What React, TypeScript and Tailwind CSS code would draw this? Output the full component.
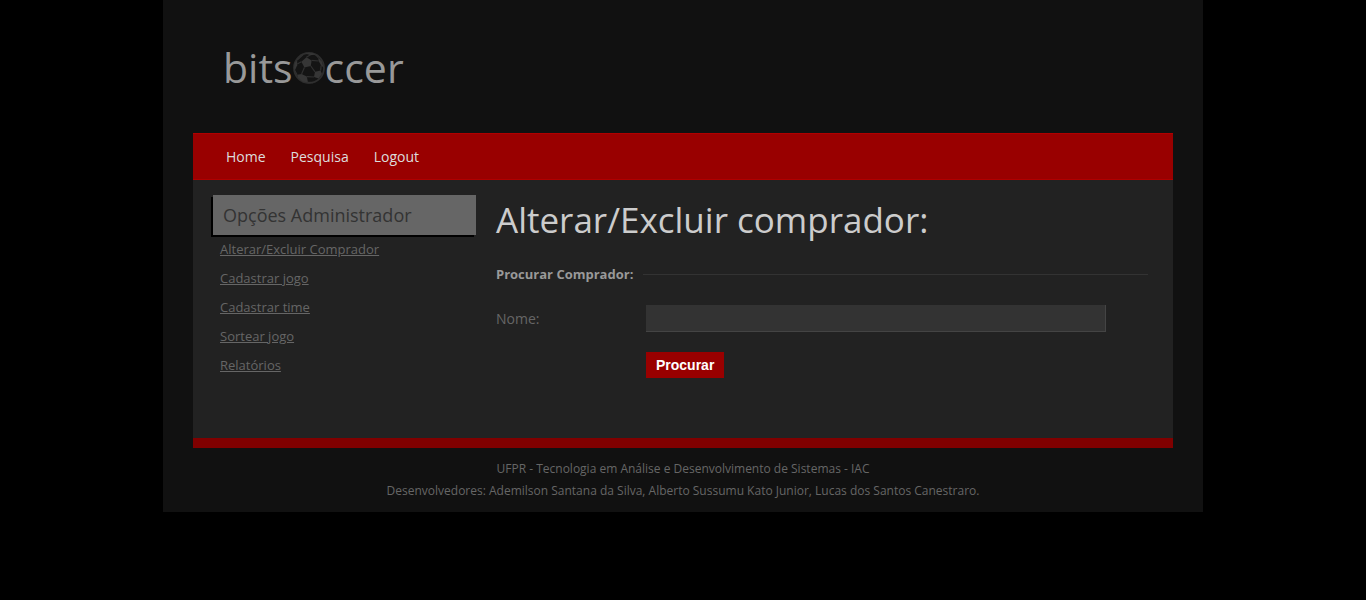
const navLinks = ['Home', 'Pesquisa', 'Logout'];

const adminLinks = [
  'Alterar/Excluir Comprador',
  'Cadastrar jogo',
  'Cadastrar time',
  'Sortear jogo',
  'Relatórios',
];

function SoccerBall() {
  return (
    <svg viewBox="0 0 32 32" className="mt-0.5 size-8" aria-hidden="true">
      <circle cx="16" cy="16" r="15" fill="#141414" stroke="#2e2e2e" strokeWidth="1.8" />
      <g fill="#363636">
        <path d="M13.4 5.2 18.6 8.4 17.8 14 11.4 15.6 8.4 9.8Z" />
        <path d="M25.2 5.6 28.8 9.4 30.6 15.4 28.2 13.4 25.6 9Z" />
        <path d="M22 19.8 27.6 18.6 29 22 25.6 26.6 21 25Z" />
        <path d="M8.6 22 13.8 24.6 15 30.4 9.5 29.4 5 25.8 4 22.8Z" />
        <path d="M1 15.5 2 10.6 4.2 8 4.2 13.2 1.8 18.4Z" />
        <path d="M12 1.2 20 1.2 22.6 2.6 17.5 3.2Z" />
      </g>
      <path
        d="M13.4 5.2 17.5 2.8M8.4 9.8 4.2 12M11.4 15.6 8.6 22M17.8 14 22 19.8M18.6 8.4 25.6 9M4 22.8 1.8 18.4M13.8 24.6 21 25M27.6 18.6 28.2 13.4M15 30.4 20 30.6M4.2 8 10 2.8M22.6 2.6 25.2 5.6"
        fill="none"
        stroke="#303030"
        strokeWidth="1.2"
      />
    </svg>
  );
}

export default function App() {
  return (
    <div className="min-h-screen bg-black font-['Open_Sans',sans-serif] text-[#666666]">
      <div className="mx-auto max-w-[1040px] bg-[#111111] px-[30px] pb-[10px]">
        <header className="px-[30px] pt-[31px] pb-[30px]">
          <a
            href="#"
            aria-label="bitsoccer"
            className="flex w-max items-center text-[41px] leading-[72px] text-[#999999]"
          >
            <span>bits</span>
            <SoccerBall />
            <span>ccer</span>
          </a>
        </header>

        <nav className="border-y border-[#b00000] bg-[#990000] px-[33px]">
          <ul className="flex gap-[25px] text-sm leading-[45px] text-[#dddddd]">
            {navLinks.map((label) => (
              <li key={label}>
                <a href="#">{label}</a>
              </li>
            ))}
          </ul>
        </nav>

        <div className="flex border-b-10 border-[#800000] bg-[#222222] pt-[15px] pr-[25px] pb-[58px] pl-5">
          <aside className="w-[263px] shrink-0">
            <h2 className="bg-[#666666] px-[10px] text-lg leading-10 text-[#333333] shadow-[-2px_2px_0_#000000]">
              Opções Administrador
            </h2>
            <ul className="px-[7px] text-[13px] leading-[29px]">
              {adminLinks.map((label) => (
                <li key={label}>
                  <a href="#" className="underline">
                    {label}
                  </a>
                </li>
              ))}
            </ul>
          </aside>

          <main className="ml-5 min-w-0 flex-1">
            <h1 className="text-[35px] leading-[50px] text-[#cccccc]">Alterar/Excluir comprador:</h1>
            <form className="mt-[19px]" onSubmit={(event) => event.preventDefault()}>
              <fieldset className="border-t border-[#333333]">
                <legend className="pr-[10px] text-[13px] leading-5 font-bold text-[#999999]">
                  Procurar Comprador:
                </legend>
                <div className="mt-[21px] flex items-center">
                  <label htmlFor="nome" className="w-[150px] shrink-0 text-sm">
                    Nome:
                  </label>
                  <input
                    id="nome"
                    type="text"
                    className="mr-[42px] h-[27px] min-w-0 flex-1 border-r border-b border-[#444444] bg-[#333333] px-1 text-sm text-[#cccccc] outline-none"
                  />
                </div>
                <button
                  type="submit"
                  className="mt-5 ml-[150px] block h-[26px] bg-[#990000] px-[10px] font-['Liberation_Sans',sans-serif] text-sm font-bold text-white"
                >
                  Procurar
                </button>
              </fieldset>
            </form>
          </main>
        </div>

        <footer className="pt-[10px] text-center text-xs leading-[22px]">
          <p>UFPR - Tecnologia em Análise e Desenvolvimento de Sistemas - IAC</p>
          <p>Desenvolvedores: Ademilson Santana da Silva, Alberto Sussumu Kato Junior, Lucas dos Santos Canestraro.</p>
        </footer>
      </div>
    </div>
  );
}
